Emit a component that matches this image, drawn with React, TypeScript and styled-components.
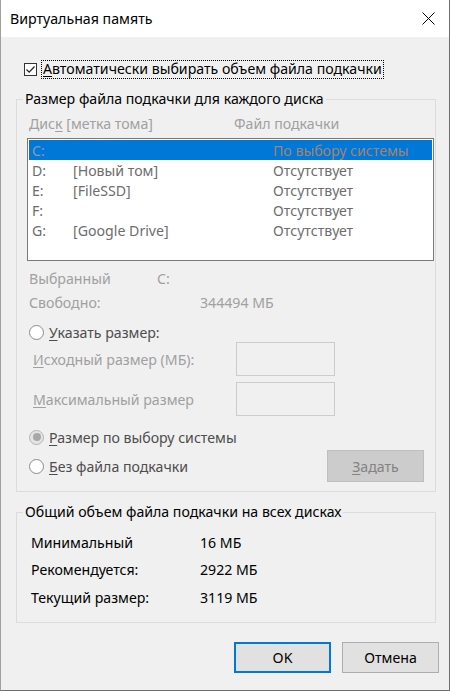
import React from "react";
import styled, { createGlobalStyle } from "styled-components";

const Global = createGlobalStyle`
  html, body { margin: 0; padding: 0; background: #ffffff; }
  body { font-family: "Noto Sans", "Open Sans", sans-serif; font-size: 14.15px; color: #000; }
  * { box-sizing: border-box; }
`;

const Window = styled.div`
  width: 450px;
  height: 691px;
  display: flex;
  flex-direction: column;
  background: #f0f0f0;
  border-left: 1px solid #a0a0a0;
  border-right: 1px solid #6e6e6e;
  border-bottom: 1px solid #6e6e6e;
`;

const TitleBar = styled.div`
  height: 37px;
  flex: none;
  display: flex;
  align-items: center;
  justify-content: space-between;
  background: #ffffff;
  padding-left: 9px;
`;

const Title = styled.span`
  font-size: 14.2px;
  color: #000;
`;

const CloseButton = styled.div`
  width: 42px;
  height: 37px;
  display: flex;
  align-items: center;
  justify-content: center;
`;

const Body = styled.div`
  flex: 1;
  display: flex;
  flex-direction: column;
  padding-left: 15px;
`;

const CheckRow = styled.div`
  margin-top: 23px;
  height: 19px;
  padding-left: 8px;
  display: flex;
  align-items: center;
`;

const CheckBox = styled.div`
  width: 13px;
  height: 13px;
  border: 1px solid #333333;
  background: #ffffff;
  display: flex;
  align-items: center;
  justify-content: center;
`;

const FocusLabel = styled.span`
  margin-left: 4px;
  height: 19px;
  line-height: 18px;
  padding: 0 2px;
  outline: 1px dotted #000;
  outline-offset: -1px;
  color: #000;
`;

const Group = styled.fieldset<{ $gap: number; $bottom: number }>`
  width: 420px;
  margin: ${(p) => p.$gap}px 0 0 0;
  padding: 0 0 ${(p) => p.$bottom}px 0;
  border: 1px solid #dcdcdc;
  min-inline-size: 0;
`;

const Legend = styled.legend`
  margin-left: 6px;
  padding: 0 2px;
  line-height: 20px;
  color: #000;
`;

const U = styled.span`
  text-decoration: underline;
  text-underline-offset: 2px;
`;

const HeaderRow = styled.div`
  margin-top: 4px;
  height: 20px;
  padding-left: 12px;
  display: flex;
  align-items: center;
  color: #a0a0a0;
`;

const HeaderCell = styled.span<{ $w?: number }>`
  width: ${(p) => (p.$w ? `${p.$w}px` : "auto")};
  flex: none;
`;

const ListBox = styled.div`
  margin: 5px 0 0 10px;
  width: 407px;
  height: 123px;
  border: 1px solid #7a7a7a;
  background: #ffffff;
  padding: 1px;
`;

const ListRow = styled.div<{ $selected?: boolean }>`
  height: 20px;
  display: flex;
  align-items: center;
  padding-left: 3px;
  background: ${(p) => (p.$selected ? "#0078d7" : "transparent")};
  color: #6d6d6d;
`;

const Cell = styled.span<{ $w?: number; $color?: string }>`
  width: ${(p) => (p.$w ? `${p.$w}px` : "auto")};
  flex: none;
  color: ${(p) => p.$color || "inherit"};
  white-space: nowrap;
`;

const InfoRow = styled.div<{ $gap: number }>`
  margin-top: ${(p) => p.$gap}px;
  height: 20px;
  padding-left: 12px;
  display: flex;
  align-items: center;
  color: #a0a0a0;
`;

const RadioRow = styled.div<{ $gap: number }>`
  margin-top: ${(p) => p.$gap}px;
  height: 20px;
  padding-left: 12px;
  display: flex;
  align-items: center;
  color: #4d4d4d;
`;

const Radio = styled.span<{ $checked?: boolean }>`
  width: 15px;
  height: 15px;
  border-radius: 50%;
  border: 1px solid ${(p) => (p.$checked ? "#b4b4b4" : "#8c8c8c")};
  background: ${(p) => (p.$checked ? "#e4e4e4" : "#ffffff")};
  display: flex;
  align-items: center;
  justify-content: center;
  flex: none;
  &::after {
    content: "";
    display: ${(p) => (p.$checked ? "block" : "none")};
    width: 8px;
    height: 8px;
    border-radius: 50%;
    background: #a8a8a8;
  }
`;

const RadioLabel = styled.span`
  margin-left: 5px;
`;

const SizeRow = styled.div<{ $gap: number }>`
  margin-top: ${(p) => p.$gap}px;
  height: 34px;
  padding-left: 16px;
  display: flex;
  align-items: center;
  color: #a0a0a0;
`;

const SizeLabel = styled.span`
  width: 203px;
  flex: none;
`;

const SizeInput = styled.div`
  width: 99px;
  height: 34px;
  border: 1px solid #cccccc;
  background: #f0f0f0;
`;

const ActionRow = styled.div`
  margin-top: 3px;
  height: 32px;
  padding: 0 11px 0 12px;
  display: flex;
  align-items: center;
  color: #4d4d4d;
`;

const DisabledButton = styled.div`
  margin-left: auto;
  width: 97px;
  height: 32px;
  background: #cccccc;
  border: 1px solid #bfbfbf;
  color: #838383;
  display: flex;
  align-items: center;
  justify-content: center;
`;

const SummaryList = styled.div`
  padding: 10px 0 0 14px;
  display: grid;
  grid-template-columns: 169px auto;
  grid-auto-rows: 20px;
  row-gap: 7.5px;
  align-items: center;
  color: #000;
`;

const Footer = styled.div`
  margin-top: 19px;
  padding-right: 10px;
  display: flex;
  justify-content: flex-end;
  gap: 11px;
`;

const DialogButton = styled.div<{ $default?: boolean }>`
  width: 97px;
  height: 31px;
  background: #e1e1e1;
  border: ${(p) => (p.$default ? "2px solid #0078d7" : "1px solid #adadad")};
  display: flex;
  align-items: center;
  justify-content: center;
  color: #000;
`;

const drives = [
  { d: "C:", label: "", file: "По выбору системы", selected: true },
  { d: "D:", label: "[Новый том]", file: "Отсутствует" },
  { d: "E:", label: "[FileSSD]", file: "Отсутствует" },
  { d: "F:", label: "", file: "Отсутствует" },
  { d: "G:", label: "[Google Drive]", file: "Отсутствует" },
];

const summary = [
  ["Минимальный", "16 МБ"],
  ["Рекомендуется:", "2922 МБ"],
  ["Текущий размер:", "3119 МБ"],
];

export default function App() {
  return (
    <>
      <Global />
      <Window>
        <TitleBar>
          <Title>Виртуальная память</Title>
          <CloseButton>
            <svg width="13" height="13" viewBox="0 0 13 13">
              <path d="M0.5 0.5 L12.5 12.5 M12.5 0.5 L0.5 12.5" stroke="#000" strokeWidth="1" />
            </svg>
          </CloseButton>
        </TitleBar>
        <Body>
          <CheckRow>
            <CheckBox>
              <svg width="11" height="11" viewBox="0 0 11 11">
                <path d="M1.5 5.5 L4.2 8.2 L9.5 2.5" stroke="#222" strokeWidth="1.2" fill="none" />
              </svg>
            </CheckBox>
            <FocusLabel>
              <U>А</U>втоматически выбирать объем файла подкачки
            </FocusLabel>
          </CheckRow>

          <Group $gap={10} $bottom={9}>
            <Legend>Размер файла подкачки для каждого диска</Legend>
            <HeaderRow>
              <HeaderCell $w={205}>
                Дис<U>к</U> [метка тома]
              </HeaderCell>
              <HeaderCell>Файл подкачки</HeaderCell>
            </HeaderRow>
            <ListBox>
              {drives.map((r) => (
                <ListRow key={r.d} $selected={r.selected}>
                  <Cell $w={41} $color={r.selected ? "#8a9bb0" : undefined}>
                    {r.d}
                  </Cell>
                  <Cell $w={200}>{r.label}</Cell>
                  <Cell $color={r.selected ? "#a8826a" : undefined}>{r.file}</Cell>
                </ListRow>
              ))}
            </ListBox>
            <InfoRow $gap={7}>
              <Cell $w={128}>Выбранный</Cell>
              <Cell>C:</Cell>
            </InfoRow>
            <InfoRow $gap={4}>
              <Cell $w={171}>Свободно:</Cell>
              <Cell>344494 МБ</Cell>
            </InfoRow>
            <RadioRow $gap={10}>
              <Radio />
              <RadioLabel>
                <U>У</U>казать размер:
              </RadioLabel>
            </RadioRow>
            <SizeRow $gap={0}>
              <SizeLabel>
                <U>И</U>сходный размер (МБ):
              </SizeLabel>
              <SizeInput />
            </SizeRow>
            <SizeRow $gap={6}>
              <SizeLabel>
                <U>М</U>аксимальный размер
              </SizeLabel>
              <SizeInput />
            </SizeRow>
            <RadioRow $gap={11}>
              <Radio $checked />
              <RadioLabel>
                <U>Р</U>азмер по выбору системы
              </RadioLabel>
            </RadioRow>
            <ActionRow>
              <Radio />
              <RadioLabel>
                <U>Б</U>ез файла подкачки
              </RadioLabel>
              <DisabledButton>
                <span>
                  <U>З</U>адать
                </span>
              </DisabledButton>
            </ActionRow>
          </Group>

          <Group $gap={10} $bottom={15}>
            <Legend>Общий объем файла подкачки на всех дисках</Legend>
            <SummaryList>
              {summary.map(([k, v]) => (
                <React.Fragment key={k}>
                  <span>{k}</span>
                  <span>{v}</span>
                </React.Fragment>
              ))}
            </SummaryList>
          </Group>

          <Footer>
            <DialogButton $default>OK</DialogButton>
            <DialogButton>Отмена</DialogButton>
          </Footer>
        </Body>
      </Window>
    </>
  );
}
